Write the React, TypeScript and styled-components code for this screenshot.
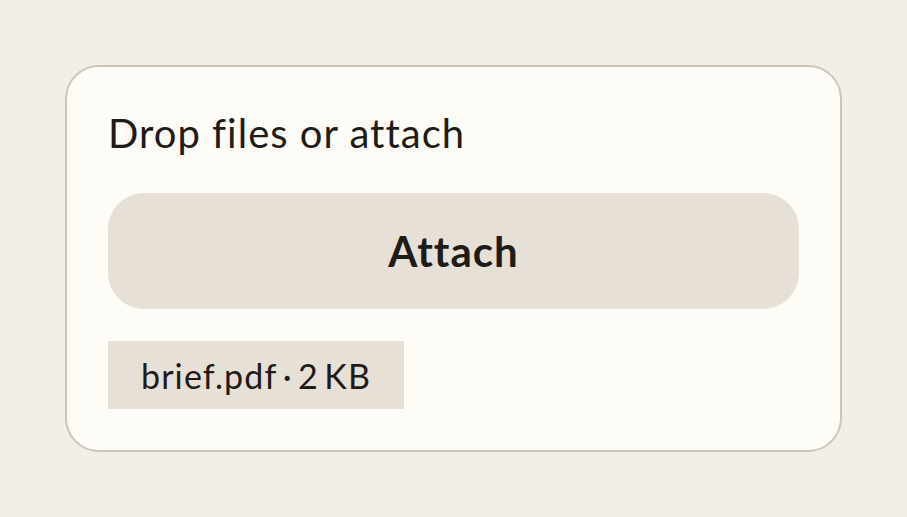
import * as React from "react";
import styled, { createGlobalStyle } from "styled-components";

const GlobalStyle = createGlobalStyle`
  html, body {
    margin: 0;
    padding: 0;
    background: #f3efe7;
    font-family: "Lato", "Noto Sans", sans-serif;
    color: #1f1b17;
  }
`;

const Page = styled.main`
  width: 907px;
  height: 517px;
  box-sizing: border-box;
  padding: 65px 65px 0 65px;
`;

const Card = styled.section`
  width: 777px;
  height: 387px;
  box-sizing: border-box;
  border: 2px solid #cdc5b8;
  border-radius: 34px;
  background: #fefcf7;
  padding: 40px 41px;
  display: flex;
  flex-direction: column;
  align-items: flex-start;
`;

const Title = styled.h2`
  margin: 0;
  font-size: 40px;
  font-weight: 400;
  letter-spacing: 1px;
  line-height: 52px;
`;

const AttachButton = styled.button`
  margin-top: 34px;
  width: 100%;
  height: 116px;
  border: none;
  border-radius: 36px;
  background: #e7e0d6;
  color: #1f1b17;
  font-family: inherit;
  font-size: 42px;
  font-weight: 700;
  letter-spacing: 1px;
  cursor: pointer;
`;

const FileChip = styled.div`
  margin-top: 32px;
  height: 68px;
  padding: 0 33px;
  display: flex;
  align-items: center;
  background: #e7e0d6;
  font-size: 34px;
  letter-spacing: 1.1px;
`;

const App = () => (
  <Page>
    <GlobalStyle />
    <Card>
      <Title>Drop files or attach</Title>
      <AttachButton type="button">Attach</AttachButton>
      <FileChip>brief.pdf{"\u2009·\u2009"}2{"\u2009"}KB</FileChip>
    </Card>
  </Page>
);

export default App;
